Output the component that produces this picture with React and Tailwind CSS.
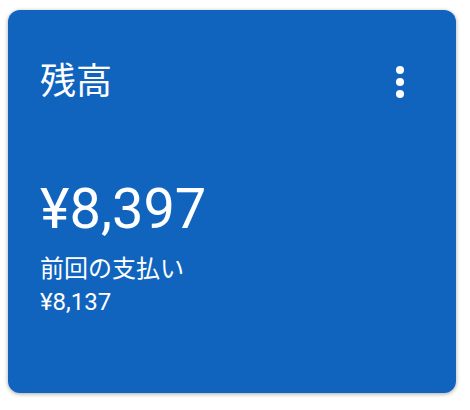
import React from 'react';

// Carte de solde : titre, menu, montant actuel et dernier paiement.

const font = { fontFamily: 'Roboto, "Noto Sans CJK JP", sans-serif' };

function MoreVert() {
  return (
    <svg width="48" height="48" viewBox="0 0 24 24" fill="white" aria-hidden="true">
      <circle cx="12" cy="6" r="2" />
      <circle cx="12" cy="12" r="2" />
      <circle cx="12" cy="18" r="2" />
    </svg>
  );
}

export default function App() {
  return (
    <div className="min-h-screen bg-white pt-[10px] pl-[8px]" style={font}>
      <div className="w-[448px] h-[383px] rounded-[12px] bg-[#1064be] text-white shadow-[0_1px_4px_rgba(0,0,0,0.35)] px-8 pt-12">
        <div className="flex items-center justify-between h-12">
          <h1 className="text-[36px] leading-[48px] font-normal">残高</h1>
          <button className="-mr-0 flex items-center justify-center">
            <MoreVert />
          </button>
        </div>

        <div className="mt-[75px] text-[56px] leading-none">¥8,397</div>

        <div className="mt-[15px] text-[24px]">
          <p className="leading-[34px]">前回の支払い</p>
          <p className="leading-[32px]">¥8,137</p>
        </div>
      </div>
    </div>
  );
}
